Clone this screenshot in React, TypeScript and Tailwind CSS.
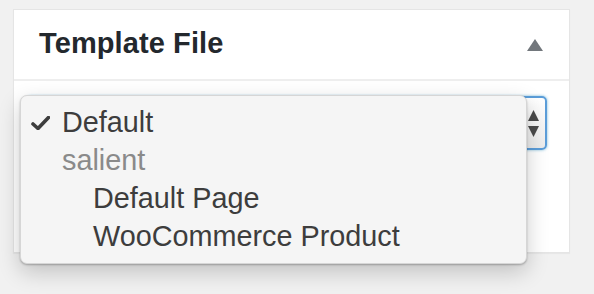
import React from 'react';

const options = [
  { label: 'Default', kind: 'checked' },
  { label: 'salient', kind: 'group' },
  { label: 'Default Page', kind: 'child' },
  { label: 'WooCommerce Product', kind: 'child' },
];

export default function App() {
  return (
    <div className="min-h-[294px] w-[594px] bg-[#f1f1f1] pt-[9px] pl-[13px] font-['Liberation_Sans',Arial,sans-serif]">
      {/* Meta box */}
      <div className="w-[557px] h-[244px] bg-white border border-[#e5e5e5] shadow-[0_1px_1px_rgba(0,0,0,0.04)]">
        {/* Header */}
        <div className="h-[71px] flex items-center justify-between pl-[25px] pr-[26px] border-b-2 border-[#eeeeee]">
          <h2 className="text-[29px] font-bold text-[#23282d] leading-none mt-[-2px] tracking-[0.1px]">Template File</h2>
          <svg width="16" height="12" viewBox="0 0 16 12">
            <polygon points="8,0 16,12 0,12" fill="#72777c" />
          </svg>
        </div>

        {/* Body */}
        <div className="relative pt-[15px] pl-[12px]">
          <div className="w-[521px] h-[54px] rounded-[5px] border-2 border-[#5b9dd9] shadow-[0_0_3px_rgba(30,140,190,0.6)] bg-gradient-to-b from-white to-[#ececec] flex items-center justify-end pr-[6px]">
            <svg width="11" height="27" viewBox="0 0 11 27">
              <polygon points="5.5,0 11,11 0,11" fill="#4a4a4a" />
              <polygon points="0,16 11,16 5.5,27" fill="#4a4a4a" />
            </svg>
          </div>

          {/* Open dropdown menu */}
          <div className="absolute left-[6px] top-[14px] w-[507px] h-[169px] rounded-[7px] bg-[#f5f5f5] border border-[#d6d6d6] shadow-[0_8px_22px_rgba(0,0,0,0.2),0_1px_2px_rgba(0,0,0,0.25)] pt-[7px] text-[28.8px] leading-[38px] text-[#3d3d3d]">
            {options.map((o) => (
              <div key={o.label} className="relative h-[38px] whitespace-nowrap">
                {o.kind === 'checked' && (
                  <svg className="absolute left-[10px] top-[13px]" width="19" height="14" viewBox="0 0 19 14">
                    <path d="M2 8 L7 12.5 L17.5 1.5" fill="none" stroke="#3d3d3d" strokeWidth="3.6" strokeLinecap="round" strokeLinejoin="round" />
                  </svg>
                )}
                <span
                  className={
                    o.kind === 'child'
                      ? 'absolute left-[72px]'
                      : o.kind === 'group'
                      ? 'absolute left-[41px] text-[#8a8a8a]'
                      : 'absolute left-[41px]'
                  }
                >
                  {o.label}
                </span>
              </div>
            ))}
          </div>
        </div>
      </div>
    </div>
  );
}
